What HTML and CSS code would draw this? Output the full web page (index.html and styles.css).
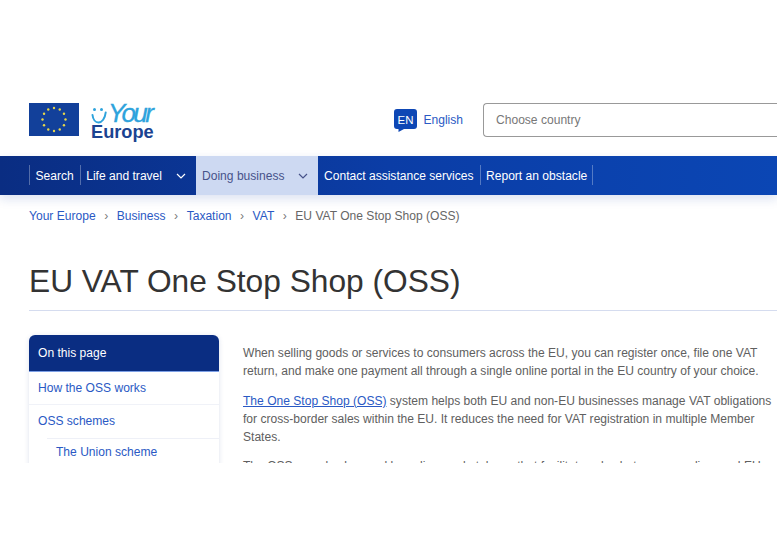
FILE: index.html
```html
<!DOCTYPE html>
<html lang="en">

<head>
    <meta charset="UTF-8">
    <meta name="viewport" content="width=device-width, initial-scale=1.0">
    <title>EU VAT One Stop Shop (OSS)</title>
    <link rel="stylesheet" href="styles.css">
</head>

<body>
    <div class="page">
        <header class="site-header">
            <a class="logo" href="#">
                <svg class="flag" width="50" height="33" viewBox="0 0 50 33">
                    <rect width="50" height="33" fill="#12409a" />
                    <g fill="#e6d64a">
                        <circle cx="25" cy="5" r="1.2" />
                        <circle cx="30.75" cy="6.54" r="1.2" />
                        <circle cx="34.96" cy="10.75" r="1.2" />
                        <circle cx="36.5" cy="16.5" r="1.2" />
                        <circle cx="34.96" cy="22.25" r="1.2" />
                        <circle cx="30.75" cy="26.46" r="1.2" />
                        <circle cx="25" cy="28" r="1.2" />
                        <circle cx="19.25" cy="26.46" r="1.2" />
                        <circle cx="15.04" cy="22.25" r="1.2" />
                        <circle cx="13.5" cy="16.5" r="1.2" />
                        <circle cx="15.04" cy="10.75" r="1.2" />
                        <circle cx="19.25" cy="6.54" r="1.2" />
                    </g>
                </svg>
                <div class="logo-text">
                    <div class="logo-top">
                        <svg class="smile" width="16" height="17" viewBox="0 0 16 17">
                            <circle cx="3.500" cy="2.500" r="1.500" fill="#2ea3dc" />
                            <circle cx="10.500" cy="2.500" r="1.500" fill="#2ea3dc" />
                            <path d="M1.500 8c.5 4.500 3 7.500 6 7.500 3.500 0 6.500-4 7.200-10" fill="none" stroke="#2ea3dc" stroke-width="2" stroke-linecap="round" />
                        </svg>
                        <span class="logo-your">Your</span>
                    </div>
                    <span class="logo-europe">Europe</span>
                </div>
            </a>
            <div class="header-right">
                <a class="lang" href="#">
                    <svg class="lang-icon" width="23" height="23" viewBox="0 0 23 23">
                        <path d="M3 0h17a3 3 0 0 1 3 3v14a3 3 0 0 1-3 3H10l-5.500 3v-3H3a3 3 0 0 1-3-3V3a3 3 0 0 1 3-3z" fill="#0e47b5" />
                        <text x="11.500" y="14.500" text-anchor="middle" class="lang-code">EN</text>
                    </svg>
                    <span>English</span>
                </a>
                <div class="country-input">Choose country</div>
            </div>
        </header>

        <nav class="main-nav">
            <a class="nav-item nav-bordered" href="#">Search</a>
            <a class="nav-item nav-bordered nav-drop" href="#">Life and travel
                <svg class="chev" width="10" height="6" viewBox="0 0 10 6"><path d="M1 1l4 4 4-4" /></svg>
            </a>
            <a class="nav-item nav-active nav-drop" href="#">Doing business
                <svg class="chev" width="10" height="6" viewBox="0 0 10 6"><path d="M1 1l4 4 4-4" /></svg>
            </a>
            <a class="nav-item" href="#">Contact assistance services</a>
            <a class="nav-item nav-bordered nav-last" href="#">Report an obstacle</a>
        </nav>

        <ol class="breadcrumb">
            <li><a href="#">Your Europe</a></li>
            <li><a href="#">Business</a></li>
            <li><a href="#">Taxation</a></li>
            <li><a href="#">VAT</a></li>
            <li>EU VAT One Stop Shop (OSS)</li>
        </ol>

        <h1>EU VAT One Stop Shop (OSS)</h1>

        <div class="content">
            <aside class="toc">
                <div class="toc-title">On this page</div>
                <a class="toc-link toc-first" href="#">How the OSS works</a>
                <a class="toc-link" href="#">OSS schemes</a>
                <a class="toc-link toc-sub" href="#">The Union scheme</a>
            </aside>
            <main class="article">
                <p>When selling goods or services to consumers across the EU, you can register once, file one VAT return, and make one payment all through a single online portal in the EU country of your choice.</p>
                <p class="article-mid"><a href="#">The One Stop Shop (OSS)</a> system helps both EU and non-EU businesses manage VAT obligations for cross-border sales within the EU. It reduces the need for VAT registration in multiple Member States.</p>
                <p>The OSS can also be used by online marketplaces that facilitate sales between suppliers and EU consumers.</p>
            </main>
        </div>
    </div>
</body>

</html>
```

FILE: styles.css
```css
body {
    margin: 0;
    font-family: 'Liberation Sans', Arial, sans-serif;
    font-size: 12.07px;
    background-color: #fff;
    color: #606060;
    overflow: hidden;
}

a {
    text-decoration: none;
    color: #2a59c4;
}

.page {
    height: 463px;
    overflow: hidden;
    padding-top: 103px;
    box-sizing: border-box;
}

.site-header {
    display: flex;
    justify-content: space-between;
    align-items: center;
    height: 34px;
    margin-bottom: 19px;
    padding-left: 29px;
}

.logo {
    display: flex;
    align-self: flex-start;
    align-items: flex-start;
    gap: 12px;
}

.flag {
    display: block;
}

.logo-text {
    display: flex;
    flex-direction: column;
    width: 66px;
    height: 37px;
}

.logo-top {
    display: flex;
    align-items: flex-end;
    height: 21px;
}

.logo-your {
    font-size: 26px;
    font-style: italic;
    line-height: 21px;
    letter-spacing: -2.500px;
    color: #2ea3dc;
    -webkit-text-stroke: 0.3px #2ea3dc;
    margin-left: 1px;
}

.logo-europe {
    font-size: 18.200px;
    font-weight: bold;
    line-height: 16px;
    color: #1b4391;
}

.header-right {
    display: flex;
    align-items: center;
    gap: 20px;
}

.lang {
    display: flex;
    align-items: center;
    gap: 6px;
}

.lang-code {
    font-family: 'Liberation Sans', Arial, sans-serif;
    font-size: 11.500px;
    fill: #fff;
}

.country-input {
    width: 281px;
    height: 32px;
    line-height: 33px;
    padding-left: 12px;
    border: 1px solid #999;
    border-right: none;
    border-radius: 4px 0 0 4px;
    color: #777;
}

.main-nav {
    display: flex;
    align-items: stretch;
    height: 39px;
    padding-left: 29px;
    background: linear-gradient(90deg, #0a2d82 0%, #0b3da6 50%, #0b46b4 100%);
    box-shadow: 0 4px 10px rgba(20, 60, 160, 0.15);
}

.nav-item {
    display: flex;
    align-items: center;
    color: #fff;
    padding: 0 6px;
    position: relative;
}

.nav-bordered {
    padding-left: 6.500px;
}

.nav-bordered::before {
    content: "";
    position: absolute;
    left: 0;
    top: 9px;
    bottom: 10px;
    width: 1px;
    background-color: rgba(255, 255, 255, 0.3);
}

.nav-last::after {
    content: "";
    position: absolute;
    right: 0;
    top: 9px;
    bottom: 10px;
    width: 1px;
    background-color: rgba(255, 255, 255, 0.3);
}

.nav-drop {
    gap: 13.500px;
    padding-right: 10px;
}

.nav-active {
    background-color: #cdd9f2;
    color: #47538a;
    padding-left: 6.500px;
}

.chev {
    fill: none;
    stroke: currentColor;
    stroke-width: 1.200;
}

.breadcrumb {
    display: flex;
    list-style: none;
    margin: 0;
    padding: 14px 0 0 29px;
    line-height: 15px;
    color: #666;
}

.breadcrumb li + li::before {
    content: "›";
    margin: 0 8.500px;
    color: #777;
}

h1 {
    margin: 38px 0 0 29px;
    padding-bottom: 9px;
    font-size: 31.700px;
    line-height: 39px;
    font-weight: normal;
    color: #333;
    border-bottom: 1px solid #d5dcef;
}

.content {
    display: flex;
    gap: 24px;
    padding: 24px 0 0 29px;
}

.toc {
    flex: 0 0 190px;
    border-radius: 6px 6px 0 0;
    box-shadow: 0 1px 5px rgba(30, 60, 140, 0.15);
}

.toc-title {
    height: 36px;
    line-height: 36px;
    padding-left: 9px;
    background-color: #0a2d82;
    color: #fff;
    border-radius: 6px 6px 0 0;
    border-bottom: 1px solid #7da0e6;
}

.toc-link {
    display: block;
    height: 33px;
    line-height: 33px;
    padding-left: 9px;
}

.toc-first {
    height: 32px;
    line-height: 32px;
    border-bottom: 1px solid #f0f2f8;
}

.toc-sub {
    margin-left: 18px;
    border-top: 1px solid #eef0f7;
    line-height: 27px;
}

.article {
    flex: 1;
    line-height: 18px;
    padding-top: 9px;
    padding-right: 4px;
}

.article p {
    margin: 0 0 12px;
}

.article .article-mid {
    margin-bottom: 11px;
}

.article a {
    text-decoration: underline;
}
```
